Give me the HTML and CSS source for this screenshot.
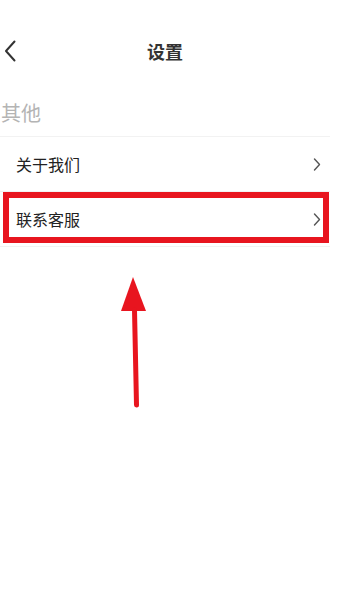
FILE: index.html
```html
<!DOCTYPE html>
<html lang="zh-CN">
  <head>
    <meta charset="UTF-8" />
    <meta name="viewport" content="width=device-width, initial-scale=1.0" />
    <title>设置</title>
    <link rel="stylesheet" href="styles.css">
  </head>
  <body>
    <div class="page">
      <!-- Top navigation -->
      <div class="nav">
        <svg class="back" width="12" height="22" viewBox="0 0 12 22">
          <path d="M10.5 1.5 L2 11 L10.5 20.5" fill="none" stroke="#333" stroke-width="2" stroke-linecap="round" stroke-linejoin="round" />
        </svg>
        <span class="title">设置</span>
        <span></span>
      </div>

      <div class="section-title">其他</div>

      <div class="list">
        <div class="row">
          <span>关于我们</span>
          <svg class="chevron" width="8" height="13" viewBox="0 0 8 13">
            <path d="M1.5 1 L6.5 6.5 L1.5 12" fill="none" stroke="#555" stroke-width="1.4" stroke-linecap="round" stroke-linejoin="round" />
          </svg>
        </div>
        <div class="row">
          <span>联系客服</span>
          <svg class="chevron" width="8" height="13" viewBox="0 0 8 13">
            <path d="M1.5 1 L6.5 6.5 L1.5 12" fill="none" stroke="#555" stroke-width="1.4" stroke-linecap="round" stroke-linejoin="round" />
          </svg>
        </div>
      </div>

      <!-- Annotation: highlight box and arrow -->
      <div class="mark-box"></div>
      <svg class="arrow" width="40" height="145" viewBox="0 0 40 145">
        <polygon points="18,7 6,41 31,41" fill="#e8151f" />
        <line x1="19.5" y1="40" x2="21.5" y2="135" stroke="#e8151f" stroke-width="5" stroke-linecap="round" />
      </svg>
    </div>
  </body>
</html>
```

FILE: styles.css
```css
/* Settings page */
body {
  margin: 0;
  background: #fff;
  font-family: "Noto Sans CJK SC", "Noto Sans", sans-serif;
}

.page {
  position: relative;
  width: 346px;
  height: 604px;
  overflow: hidden;
}

.nav {
  width: 330px;
  height: 42px;
  padding-top: 30px;
  display: grid;
  grid-template-columns: 40px 1fr 40px;
  align-items: center;
}

.back {
  margin-left: 4px;
  display: block;
}

.title {
  text-align: center;
  font-size: 18px;
  font-weight: bold;
  color: #333;
  line-height: 24px;
}

.section-title {
  width: 329px;
  padding: 26px 0 9px 1px;
  font-size: 20px;
  line-height: 29px;
  color: #b4b4b4;
  border-bottom: 1px solid #f2f2f2;
}

.list {
  width: 330px;
}

.row {
  height: 54px;
  display: flex;
  align-items: center;
  justify-content: space-between;
  padding: 0 9px 0 16px;
  border-bottom: 1px solid #f2f2f2;
  font-size: 16px;
  color: #222;
}

.chevron {
  display: block;
}

.mark-box {
  position: absolute;
  left: 3px;
  top: 192px;
  width: 326px;
  height: 51px;
  box-sizing: border-box;
  border: 6px solid #e8151f;
}

.arrow {
  position: absolute;
  left: 115px;
  top: 270px;
}
```
